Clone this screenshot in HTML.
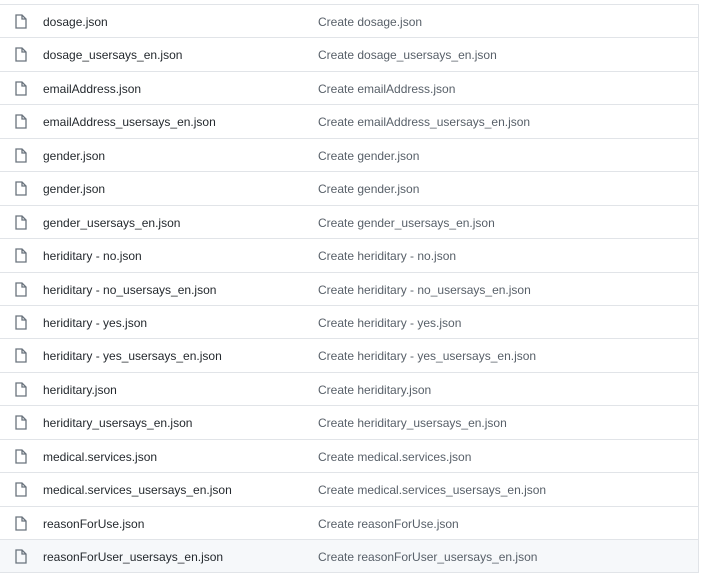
<!DOCTYPE html>
<html><head><style>
body{margin:0;background:#fff;width:701px;height:573px;overflow:hidden;font-family:"Liberation Sans",sans-serif;font-size:12px;}
.box{position:absolute;left:-2px;top:4px;width:700px;border-top:1px solid #e1e4e8;border-right:1px solid #e1e4e8;}
.r{position:relative;height:32.45px;border-bottom:1px solid #e1e4e8;}
.r svg{position:absolute;left:17px;top:9px;}
.n{position:absolute;left:45px;top:10px;color:#24292e;}
.m{position:absolute;left:320px;top:10px;color:#586069;}
.last{background:#f6f8fa;}
</style></head><body>
<div class="box">
<div class="r"><svg width="12" height="15" viewBox="0 0 12 15"><path d="M1 1h6l4 4v9H1z M7 1v4h4" fill="none" stroke="#6a737d" stroke-width="1.3"/></svg><span class="n">dosage.json</span><span class="m">Create dosage.json</span></div>
<div class="r"><svg width="12" height="15" viewBox="0 0 12 15"><path d="M1 1h6l4 4v9H1z M7 1v4h4" fill="none" stroke="#6a737d" stroke-width="1.3"/></svg><span class="n">dosage_usersays_en.json</span><span class="m">Create dosage_usersays_en.json</span></div>
<div class="r"><svg width="12" height="15" viewBox="0 0 12 15"><path d="M1 1h6l4 4v9H1z M7 1v4h4" fill="none" stroke="#6a737d" stroke-width="1.3"/></svg><span class="n">emailAddress.json</span><span class="m">Create emailAddress.json</span></div>
<div class="r"><svg width="12" height="15" viewBox="0 0 12 15"><path d="M1 1h6l4 4v9H1z M7 1v4h4" fill="none" stroke="#6a737d" stroke-width="1.3"/></svg><span class="n">emailAddress_usersays_en.json</span><span class="m">Create emailAddress_usersays_en.json</span></div>
<div class="r"><svg width="12" height="15" viewBox="0 0 12 15"><path d="M1 1h6l4 4v9H1z M7 1v4h4" fill="none" stroke="#6a737d" stroke-width="1.3"/></svg><span class="n">gender.json</span><span class="m">Create gender.json</span></div>
<div class="r"><svg width="12" height="15" viewBox="0 0 12 15"><path d="M1 1h6l4 4v9H1z M7 1v4h4" fill="none" stroke="#6a737d" stroke-width="1.3"/></svg><span class="n">gender.json</span><span class="m">Create gender.json</span></div>
<div class="r"><svg width="12" height="15" viewBox="0 0 12 15"><path d="M1 1h6l4 4v9H1z M7 1v4h4" fill="none" stroke="#6a737d" stroke-width="1.3"/></svg><span class="n">gender_usersays_en.json</span><span class="m">Create gender_usersays_en.json</span></div>
<div class="r"><svg width="12" height="15" viewBox="0 0 12 15"><path d="M1 1h6l4 4v9H1z M7 1v4h4" fill="none" stroke="#6a737d" stroke-width="1.3"/></svg><span class="n">heriditary - no.json</span><span class="m">Create heriditary - no.json</span></div>
<div class="r"><svg width="12" height="15" viewBox="0 0 12 15"><path d="M1 1h6l4 4v9H1z M7 1v4h4" fill="none" stroke="#6a737d" stroke-width="1.3"/></svg><span class="n">heriditary - no_usersays_en.json</span><span class="m">Create heriditary - no_usersays_en.json</span></div>
<div class="r"><svg width="12" height="15" viewBox="0 0 12 15"><path d="M1 1h6l4 4v9H1z M7 1v4h4" fill="none" stroke="#6a737d" stroke-width="1.3"/></svg><span class="n">heriditary - yes.json</span><span class="m">Create heriditary - yes.json</span></div>
<div class="r"><svg width="12" height="15" viewBox="0 0 12 15"><path d="M1 1h6l4 4v9H1z M7 1v4h4" fill="none" stroke="#6a737d" stroke-width="1.3"/></svg><span class="n">heriditary - yes_usersays_en.json</span><span class="m">Create heriditary - yes_usersays_en.json</span></div>
<div class="r"><svg width="12" height="15" viewBox="0 0 12 15"><path d="M1 1h6l4 4v9H1z M7 1v4h4" fill="none" stroke="#6a737d" stroke-width="1.3"/></svg><span class="n">heriditary.json</span><span class="m">Create heriditary.json</span></div>
<div class="r"><svg width="12" height="15" viewBox="0 0 12 15"><path d="M1 1h6l4 4v9H1z M7 1v4h4" fill="none" stroke="#6a737d" stroke-width="1.3"/></svg><span class="n">heriditary_usersays_en.json</span><span class="m">Create heriditary_usersays_en.json</span></div>
<div class="r"><svg width="12" height="15" viewBox="0 0 12 15"><path d="M1 1h6l4 4v9H1z M7 1v4h4" fill="none" stroke="#6a737d" stroke-width="1.3"/></svg><span class="n">medical.services.json</span><span class="m">Create medical.services.json</span></div>
<div class="r"><svg width="12" height="15" viewBox="0 0 12 15"><path d="M1 1h6l4 4v9H1z M7 1v4h4" fill="none" stroke="#6a737d" stroke-width="1.3"/></svg><span class="n">medical.services_usersays_en.json</span><span class="m">Create medical.services_usersays_en.json</span></div>
<div class="r"><svg width="12" height="15" viewBox="0 0 12 15"><path d="M1 1h6l4 4v9H1z M7 1v4h4" fill="none" stroke="#6a737d" stroke-width="1.3"/></svg><span class="n">reasonForUse.json</span><span class="m">Create reasonForUse.json</span></div>
<div class="r last"><svg width="12" height="15" viewBox="0 0 12 15"><path d="M1 1h6l4 4v9H1z M7 1v4h4" fill="none" stroke="#6a737d" stroke-width="1.3"/></svg><span class="n">reasonForUser_usersays_en.json</span><span class="m">Create reasonForUser_usersays_en.json</span></div>
</div>
</body></html>
